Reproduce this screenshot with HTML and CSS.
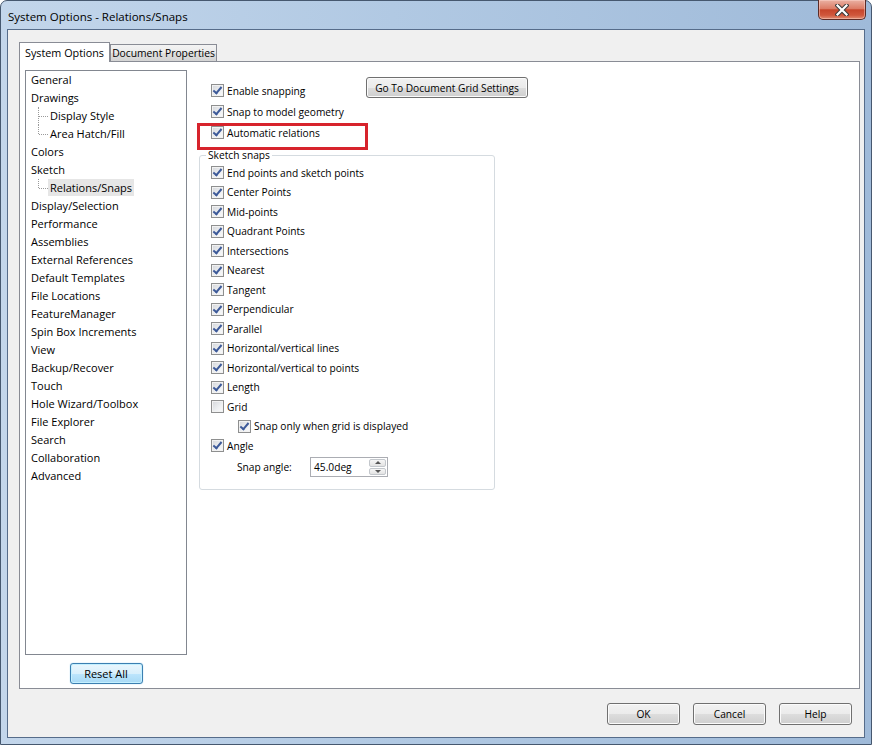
FILE: index.html
```html
<!DOCTYPE html>
<html lang="en">
<head>
    <meta charset="UTF-8">
    <title>System Options - Relations/Snaps</title>
    <link rel="stylesheet" href="styles.css">
</head>
<body>
    <div class="window">
        <div class="titlebar">
            <span class="title">System Options - Relations/Snaps</span>
            <button class="close-btn" aria-label="Close">
                <svg width="14" height="12" viewBox="0 0 14 12">
                    <path d="M2.5 1.5 L11.5 10.5 M11.5 1.5 L2.5 10.5" stroke="#3a3a3a" stroke-width="4.2" stroke-linecap="square"/>
                    <path d="M2.5 1.5 L11.5 10.5 M11.5 1.5 L2.5 10.5" stroke="#fff" stroke-width="2.2" stroke-linecap="square"/>
                </svg>
            </button>
        </div>

        <div class="client">
            <div class="tabs">
                <div class="tab active">System Options</div>
                <div class="tab">Document Properties</div>
            </div>

            <div class="panel">
                <div class="side">
                    <ul class="tree">
                        <li>General</li>
                        <li>Drawings</li>
                        <li class="child">Display Style</li>
                        <li class="child last">Area Hatch/Fill</li>
                        <li>Colors</li>
                        <li>Sketch</li>
                        <li class="child last"><span class="selected">Relations/Snaps</span></li>
                        <li>Display/Selection</li>
                        <li>Performance</li>
                        <li>Assemblies</li>
                        <li>External References</li>
                        <li>Default Templates</li>
                        <li>File Locations</li>
                        <li>FeatureManager</li>
                        <li>Spin Box Increments</li>
                        <li>View</li>
                        <li>Backup/Recover</li>
                        <li>Touch</li>
                        <li>Hole Wizard/Toolbox</li>
                        <li>File Explorer</li>
                        <li>Search</li>
                        <li>Collaboration</li>
                        <li>Advanced</li>
                    </ul>
                    <button class="btn btn-default reset-btn">Reset All</button>
                </div>

                <div class="content">
                    <div class="top-row">
                        <div class="options">
                            <label class="check"><span class="cb on"></span>Enable snapping</label>
                            <label class="check"><span class="cb on"></span>Snap to model geometry</label>
                            <label class="check marked"><span class="cb on"></span>Automatic relations</label>
                        </div>
                        <button class="btn grid-btn">Go To Document Grid Settings</button>
                    </div>

                    <fieldset class="group">
                        <legend>Sketch snaps</legend>
                        <label class="check snap"><span class="cb on"></span>End points and sketch points</label>
                        <label class="check snap"><span class="cb on"></span>Center Points</label>
                        <label class="check snap"><span class="cb on"></span>Mid-points</label>
                        <label class="check snap"><span class="cb on"></span>Quadrant Points</label>
                        <label class="check snap"><span class="cb on"></span>Intersections</label>
                        <label class="check snap"><span class="cb on"></span>Nearest</label>
                        <label class="check snap"><span class="cb on"></span>Tangent</label>
                        <label class="check snap"><span class="cb on"></span>Perpendicular</label>
                        <label class="check snap"><span class="cb on"></span>Parallel</label>
                        <label class="check snap"><span class="cb on"></span>Horizontal/vertical lines</label>
                        <label class="check snap"><span class="cb on"></span>Horizontal/vertical to points</label>
                        <label class="check snap"><span class="cb on"></span>Length</label>
                        <label class="check snap"><span class="cb"></span>Grid</label>
                        <label class="check snap nested"><span class="cb on"></span>Snap only when grid is displayed</label>
                        <label class="check snap"><span class="cb on"></span>Angle</label>
                        <div class="angle-row">
                            <span class="angle-label">Snap angle:</span>
                            <div class="spin">
                                <span class="spin-value">45.0deg</span>
                                <span class="spin-btns">
                                    <span class="spin-up"></span>
                                    <span class="spin-down"></span>
                                </span>
                            </div>
                        </div>
                    </fieldset>
                </div>
            </div>

            <div class="footer">
                <button class="btn">OK</button>
                <button class="btn">Cancel</button>
                <button class="btn">Help</button>
            </div>
        </div>
    </div>
</body>
</html>
```

FILE: styles.css
```css
* {
    box-sizing: border-box;
}

body {
    margin: 0;
    background: #fff;
    font-family: "Open Sans", "Noto Sans", sans-serif;
    font-size: 11px;
    color: #000;
}

/* window frame */
.window {
    width: 872px;
    height: 745px;
    border: 1px solid #46586f;
    border-radius: 7px 7px 0 0;
    background: linear-gradient(90deg, #c3d6eb 0%, #b1c9e3 45%, #9fbad9 100%);
    padding: 0 6px 6px;
    display: flex;
    flex-direction: column;
}

.titlebar {
    height: 28px;
    margin: 0 -6px;
    padding: 0 5px 0 7px;
    display: flex;
    align-items: center;
    justify-content: space-between;
}

.title {
    font-size: 11.5px;
    color: #000;
    margin-top: 2px;
}

.close-btn {
    align-self: flex-start;
    margin-top: -1px;
    width: 48px;
    height: 20px;
    padding: 0;
    border: 1px solid #5c2b26;
    border-top: none;
    border-radius: 0 0 5px 5px;
    background: linear-gradient(#eab1a3 0%, #dc7c66 45%, #c6452b 52%, #d0573c 80%, #e08d73 100%);
    box-shadow: inset 0 0 0 1px rgba(255, 220, 210, 0.45);
    display: flex;
    align-items: center;
    justify-content: center;
}

.client {
    flex: 1;
    border: 1px solid #566c8a;
    background: #f0f0f0;
    padding: 12px 0 0 11px;
    display: flex;
    flex-direction: column;
}

/* tabs */
.tabs {
    display: flex;
    align-items: flex-start;
    height: 19px;
    font-size: 10.3px;
}

.tab {
    height: 17px;
    margin-top: 2px;
    border: 1px solid #898c95;
    border-bottom: none;
    background: linear-gradient(#f3f3f3, #ebebeb 50%, #dedede 50%, #d4d4d4);
    display: flex;
    align-items: center;
    justify-content: center;
    width: 107px;
    white-space: nowrap;
}

.tab.active {
    width: 91px;
    height: 20px;
    margin-top: 0;
    background: #fff;
    position: relative;
    z-index: 1;
    padding-bottom: 1px;
    font-size: 10.8px;
}

.panel {
    width: 841px;
    height: 628px;
    border: 1px solid #898c95;
    background: #fff;
    display: flex;
    padding: 8px 0 0 5px;
}

/* left tree */
.side {
    width: 162px;
    display: flex;
    flex-direction: column;
    align-items: center;
    gap: 8px;
}

.tree {
    list-style: none;
    margin: 0;
    width: 162px;
    height: 585px;
    border: 1px solid #828790;
    background: #fff;
    padding: 0 0 0 5px;
}

.tree li {
    height: 18px;
    line-height: 18px;
    white-space: nowrap;
    position: relative;
}

.tree li.child {
    padding-left: 19px;
}

.tree li.child::before {
    content: "";
    position: absolute;
    left: 7px;
    top: 0;
    height: 100%;
    border-left: 1px dotted #9a9a9a;
}

.tree li.child.last::before {
    height: 9px;
}

.tree li.child::after {
    content: "";
    position: absolute;
    left: 8px;
    top: 9px;
    width: 9px;
    border-top: 1px dotted #9a9a9a;
}

.selected {
    background: #e6e6e6;
    padding: 0 2px;
    margin-left: -2px;
    display: inline-block;
    line-height: 17px;
}

/* buttons */
.btn {
    font-family: inherit;
    font-size: 10.2px;
    color: #000;
    height: 22px;
    width: 73px;
    padding: 0;
    border: 1px solid #707070;
    border-radius: 3px;
    background: linear-gradient(#f2f2f2, #ebebeb 50%, #dddddd 50%, #cfcfcf);
    box-shadow: inset 0 0 0 1px #fbfbfb;
}

.btn-default {
    border-color: #3c7fb1;
    background: linear-gradient(#eaf6fd, #d9f0fc 50%, #bee6fd 50%, #a7d9f5);
    box-shadow: inset 0 0 0 1px #c4f0ff, 0 0 1px #62b8e8;
}

.reset-btn {
    height: 21px;
    font-size: 11px;
}

/* right content */
.content {
    margin-left: 12px;
    padding-top: 7px;
    width: 296px;
    font-size: 10.2px;
}

.top-row {
    display: flex;
    align-items: flex-start;
    padding-left: 12px;
}

.options {
    width: 155px;
    margin-top: 3px;
    flex: none;
}

.grid-btn {
    width: 162px;
    height: 21px;
    flex: none;
}

.check {
    display: flex;
    align-items: center;
    height: 21px;
    white-space: nowrap;
    position: relative;
}

.check.snap {
    height: 19.5px;
}

.check.nested {
    padding-left: 27px;
}

.check.marked::after {
    content: "";
    position: absolute;
    left: -14px;
    top: 1px;
    width: 165px;
    height: 21px;
    border: 3px solid #d7232c;
}

.cb {
    width: 13px;
    height: 13px;
    flex: none;
    margin-right: 3px;
    border: 1px solid #8e8f8f;
    background: linear-gradient(135deg, #d4d6da 0%, #eef0f2 60%, #fafafa 100%);
    box-shadow: inset 0 0 0 1px #f2f2f2;
    position: relative;
}

.cb.on::after {
    content: "";
    position: absolute;
    left: 3px;
    top: 0;
    width: 3px;
    height: 7px;
    border: solid #3d5a99;
    border-width: 0 2px 2px 0;
    transform: rotate(40deg);
}

/* sketch snaps group */
.group {
    margin: 5px 0 0;
    min-width: 0;
    width: 296px;
    border: 1px solid #d5dbe0;
    border-radius: 3px;
    padding: 0 0 11px 11px;
}

.group legend {
    padding: 0 2px;
    margin-left: -5px;
    line-height: 15px;
}

.angle-row {
    display: flex;
    align-items: center;
    height: 21px;
    margin-top: 1px;
    padding-left: 26px;
}

.angle-label {
    width: 73px;
}

.spin {
    width: 78px;
    height: 20px;
    border: 1px solid #abadb3;
    background: #fff;
    display: flex;
    align-items: center;
    padding: 1px;
}

.spin-value {
    flex: 1;
    padding-left: 2px;
}

.spin-btns {
    width: 17px;
    height: 100%;
    display: flex;
    flex-direction: column;
    gap: 1px;
}

.spin-up,
.spin-down {
    flex: 1;
    border: 1px solid #c3c7cc;
    border-radius: 2px;
    background: linear-gradient(#f6f6f6, #e3e3e3);
    display: flex;
    align-items: center;
    justify-content: center;
}

.spin-up::after {
    content: "";
    border-left: 3px solid transparent;
    border-right: 3px solid transparent;
    border-bottom: 3px solid #555;
}

.spin-down::after {
    content: "";
    border-left: 3px solid transparent;
    border-right: 3px solid transparent;
    border-top: 3px solid #555;
}

/* dialog buttons */
.footer {
    display: flex;
    justify-content: flex-end;
    gap: 13px;
    margin-top: 14px;
    margin-right: 12px;
}
```
